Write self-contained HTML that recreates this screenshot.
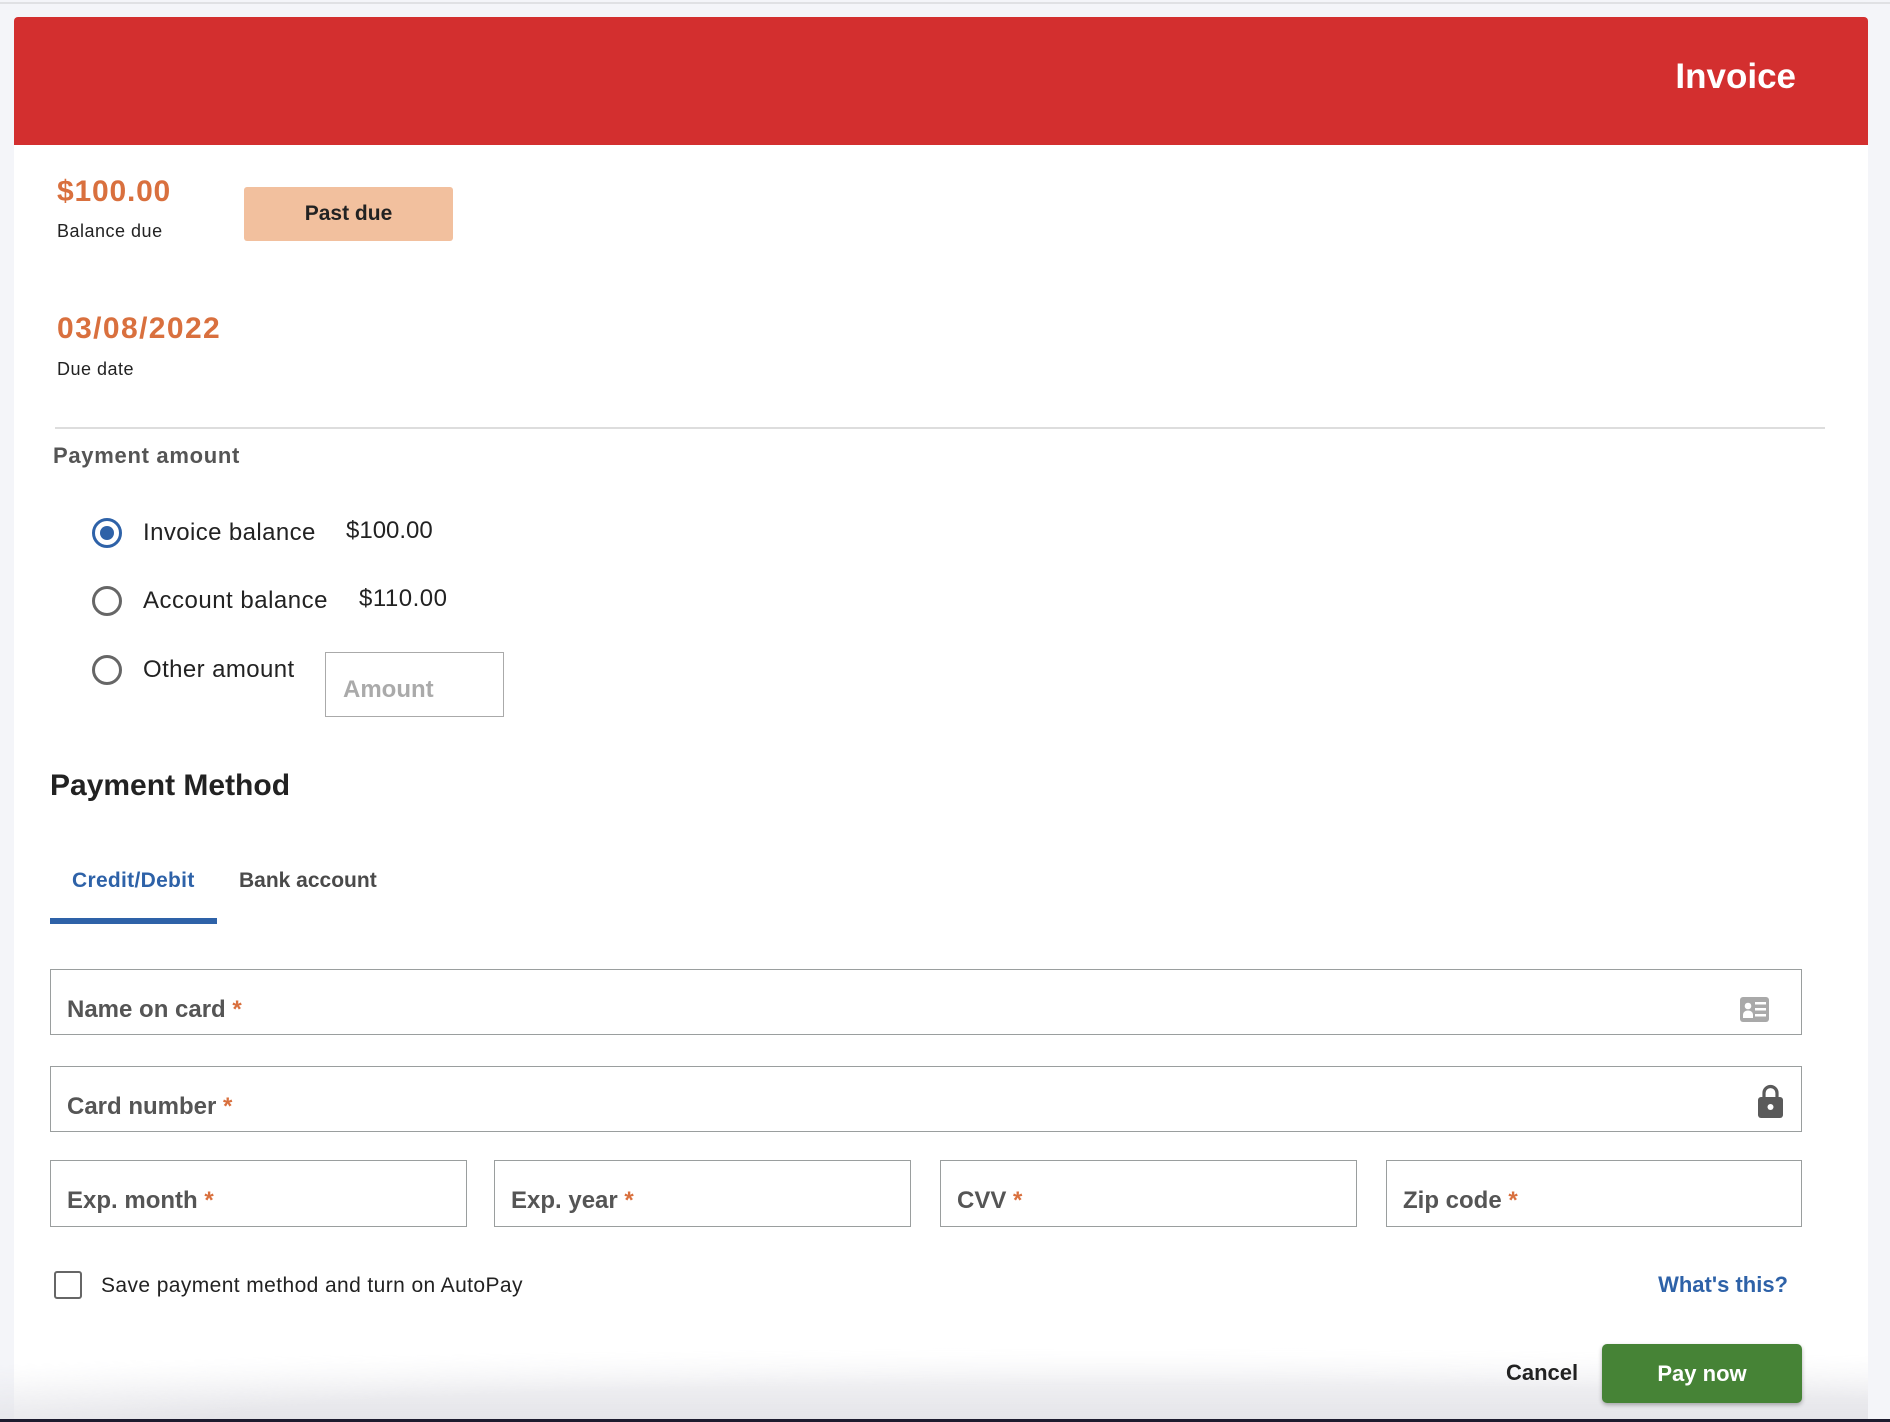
<!DOCTYPE html>
<html><head><meta charset="utf-8"><style>
*{margin:0;padding:0;box-sizing:border-box}
body{width:1890px;height:1422px;position:relative;overflow:hidden;background:#f4f5f9;font-family:"Liberation Sans",Arial,sans-serif}
.a{position:absolute;white-space:nowrap;line-height:1}
.card{position:absolute;left:14px;top:17px;width:1854px;height:1405px;background:#fff;border-radius:4px 4px 0 0}
.hdr{position:absolute;left:14px;top:17px;width:1854px;height:128px;background:#d32f2f;border-radius:4px 4px 0 0}
.or{color:#d9703e;font-weight:bold;font-size:30px;letter-spacing:0.8px}
.radio{position:absolute;width:30px;height:30px;border-radius:50%;border:3px solid #666}
.fld{position:absolute;border:1.5px solid #9a9e9e;background:#fff}
.fld span{position:absolute;left:16px;top:28px;font-size:24px;font-weight:bold;color:#555;line-height:1}
.fld b{color:#d9703e}
</style></head><body>
<div class="a" style="left:0;top:2px;width:1890px;height:2px;background:#e0e1e4"></div>
<div class="card"></div>
<div class="hdr"></div>
<div class="a" style="right:94px;top:59px;font-size:35px;font-weight:bold;color:#fff">Invoice</div>

<div class="a or" style="left:57px;top:177px">$100.00</div>
<div class="a" style="left:57px;top:222px;font-size:18px;color:#222;letter-spacing:0.5px">Balance due</div>
<div class="a" style="left:244px;top:187px;width:209px;height:54px;background:#f2c09e;border-radius:3px;font-size:21px;font-weight:bold;color:#222;text-align:center;line-height:54px">Past due</div>
<div class="a or" style="left:57px;top:314px;letter-spacing:1.4px">03/08/2022</div>
<div class="a" style="left:57px;top:360px;font-size:18px;color:#222;letter-spacing:0.5px">Due date</div>
<div class="a" style="left:55px;top:427px;width:1770px;height:2px;background:#ddd"></div>
<div class="a" style="left:53px;top:445px;font-size:22px;font-weight:bold;color:#555;letter-spacing:0.7px">Payment amount</div>

<div class="radio" style="left:92px;top:518px;border-color:#2e62a8"></div>
<div class="a" style="left:100px;top:526px;width:14px;height:14px;border-radius:50%;background:#2e62a8"></div>
<div class="a" style="left:143px;top:521px;font-size:24px;color:#222;letter-spacing:0.4px">Invoice balance</div>
<div class="a" style="left:346px;top:519px;font-size:24px;color:#222">$100.00</div>
<div class="radio" style="left:92px;top:586px"></div>
<div class="a" style="left:143px;top:589px;font-size:24px;color:#222;letter-spacing:0.5px">Account balance</div>
<div class="a" style="left:359px;top:587px;font-size:24px;color:#222;letter-spacing:0.5px">$110.00</div>
<div class="radio" style="left:92px;top:655px"></div>
<div class="a" style="left:143px;top:658px;font-size:24px;color:#222;letter-spacing:0.4px">Other amount</div>
<div class="a" style="left:325px;top:652px;width:179px;height:65px;border:1.5px solid #aaa"></div>
<div class="a" style="left:343px;top:678px;font-size:24px;font-weight:bold;color:#aaa">Amount</div>

<div class="a" style="left:50px;top:771px;font-size:30px;font-weight:bold;color:#222">Payment Method</div>
<div class="a" style="left:72px;top:870px;font-size:21px;font-weight:bold;color:#2e62a8;letter-spacing:0.3px">Credit/Debit</div>
<div class="a" style="left:239px;top:870px;font-size:21px;font-weight:bold;color:#4a4a4a">Bank account</div>
<div class="a" style="left:50px;top:918px;width:167px;height:6px;background:#2e62a8"></div>

<div class="fld" style="left:50px;top:969px;width:1752px;height:66px"><span>Name on card <b>*</b></span>
<svg style="position:absolute;left:1689px;top:27px" width="29" height="25" viewBox="0 0 29 25"><rect x="0" y="0" width="29" height="25" rx="3" fill="#a9a9a9"/><circle cx="8" cy="9" r="3.3" fill="#fff"/><path d="M3 21v-3c0-3 2.5-4.5 5-4.5s5 1.5 5 4.5v3z" fill="#fff"/><rect x="15" y="5" width="11" height="2.5" fill="#fff"/><rect x="15" y="11" width="11" height="2.5" fill="#fff"/><rect x="15" y="17" width="11" height="2.5" fill="#fff"/></svg></div>
<div class="fld" style="left:50px;top:1066px;width:1752px;height:66px"><span>Card number <b>*</b></span>
<svg style="position:absolute;left:1707px;top:17px" width="25" height="34" viewBox="0 0 25 34"><path d="M6 14V9a6.5 6.5 0 0 1 13 0v5" fill="none" stroke="#5a5a5a" stroke-width="3.2"/><rect x="0" y="13" width="25" height="21" rx="3" fill="#5a5a5a"/><circle cx="12.5" cy="23" r="3" fill="#fff"/></svg></div>
<div class="fld" style="left:50px;top:1160px;width:417px;height:67px"><span>Exp. month <b>*</b></span></div>
<div class="fld" style="left:494px;top:1160px;width:417px;height:67px"><span>Exp. year <b>*</b></span></div>
<div class="fld" style="left:940px;top:1160px;width:417px;height:67px"><span>CVV <b>*</b></span></div>
<div class="fld" style="left:1386px;top:1160px;width:416px;height:67px"><span>Zip code <b>*</b></span></div>

<div class="a" style="left:54px;top:1271px;width:28px;height:28px;border:2.5px solid #666;border-radius:3px"></div>
<div class="a" style="left:101px;top:1275px;font-size:21px;color:#222;letter-spacing:0.4px">Save payment method and turn on AutoPay</div>
<div class="a" style="right:102px;top:1274px;font-size:22px;font-weight:bold;color:#2e62a8">What's this?</div>

<div class="a" style="left:0;top:1330px;width:1868px;height:90px;background:linear-gradient(to bottom,rgba(230,230,235,0),rgba(225,225,230,.9));-webkit-mask:radial-gradient(ellipse 120% 100% at 60% 100%,#000 40%,transparent 80%)"></div>
<div class="a" style="left:1506px;top:1362px;font-size:22px;font-weight:bold;color:#222">Cancel</div>
<div class="a" style="left:1602px;top:1344px;width:200px;height:59px;background:#468336;border-radius:5px;box-shadow:0 2px 4px rgba(0,0,0,.3);color:#fff;font-size:22px;font-weight:bold;text-align:center;line-height:59px">Pay now</div>
<div class="a" style="left:0;top:1419px;width:1890px;height:3px;background:#1c1b2e"></div>
</body></html>
